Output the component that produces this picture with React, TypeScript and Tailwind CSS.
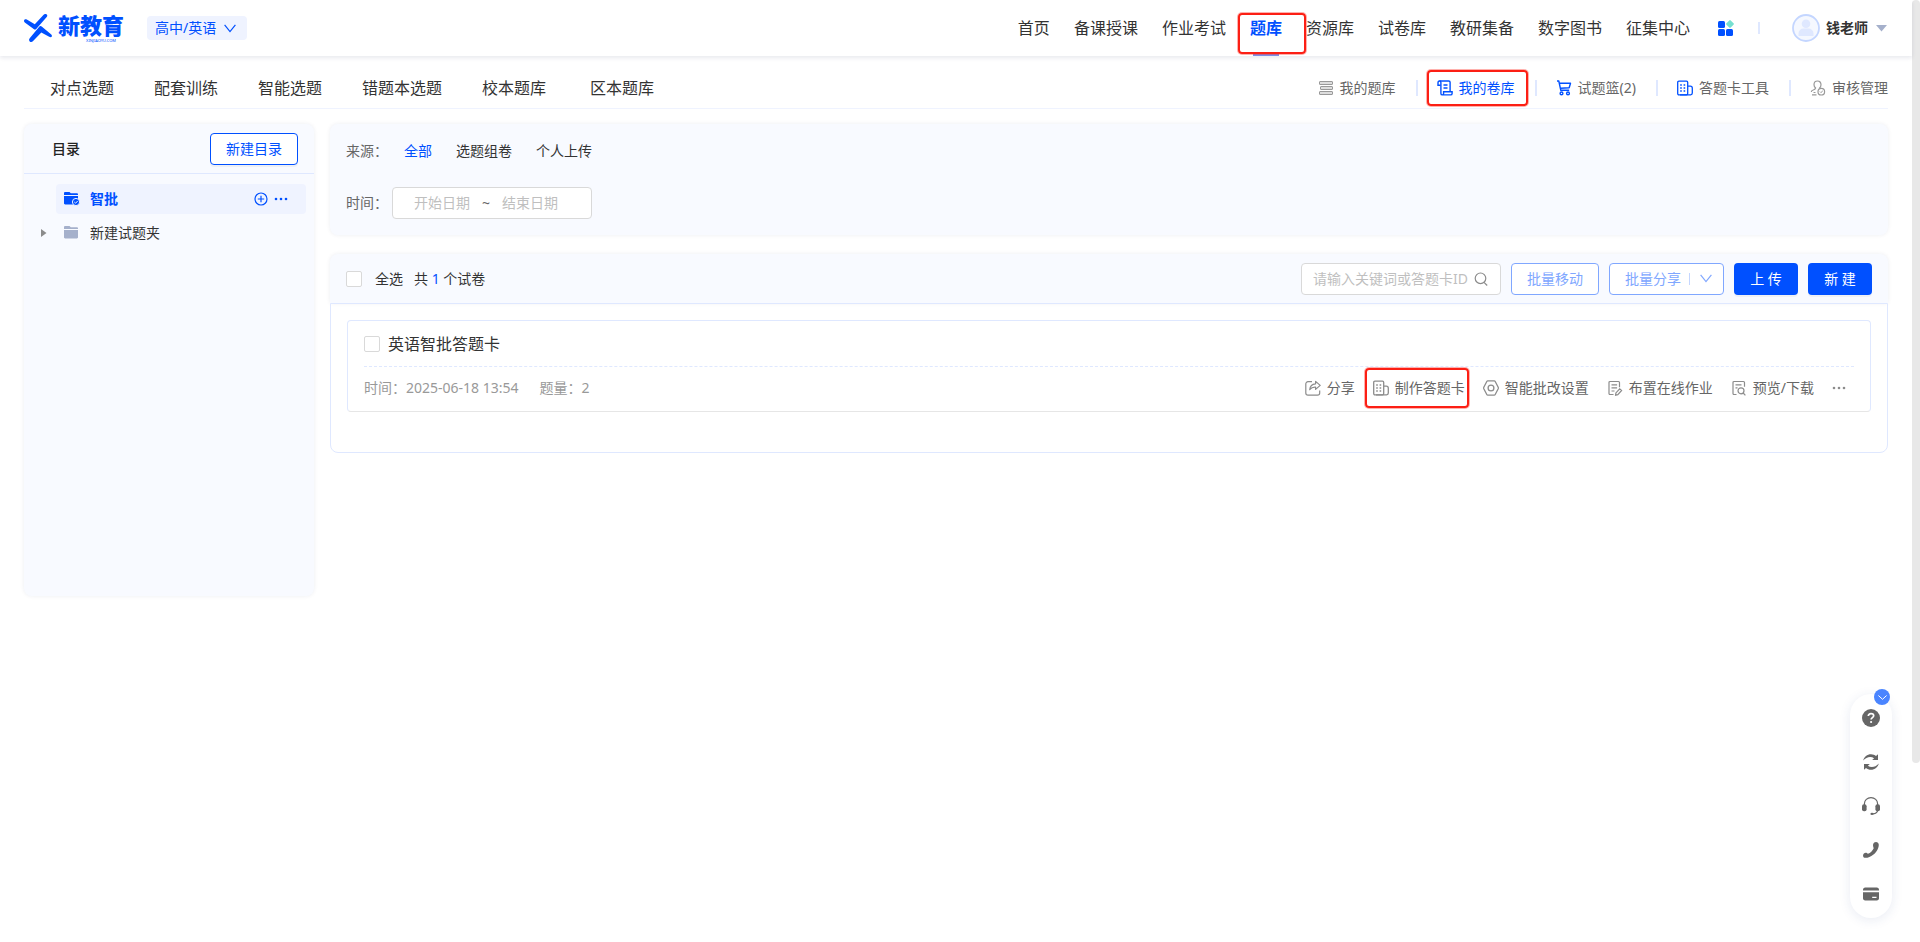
import { type ReactNode, useState } from "react";
import clsx from "clsx";

interface IconProps {
  className?: string;
}

interface Tool {
  label: string;
  icon: ReactNode;
  active?: boolean;
  marked?: boolean;
}

const NAV = [
  "首页",
  "备课授课",
  "作业考试",
  "题库",
  "资源库",
  "试卷库",
  "教研集备",
  "数字图书",
  "征集中心",
];

const TABS = ["对点选题", "配套训练", "智能选题", "错题本选题", "校本题库", "区本题库"];

const SOURCES = ["全部", "选题组卷", "个人上传"];

const FOCUS = "outline-none focus-visible:ring-2 focus-visible:ring-[#80a7ff]";

function LogoMark() {
  return (
    <svg width="28" height="28" viewBox="0 0 28 28" fill="#0050ff" aria-hidden="true">
      <path d="M0 7c0-1.700 1.400-2.300 2.800-1.500l8 4.700L19.400.900c1-1 2.600-1.200 3.400-.5.800.7.500 2-.3 2.900L12.200 14.900c-.8.800-1.700.8-2.500.1L.8 8.600C.3 8.100 0 7.600 0 7z" />
      <path d="M5.200 26.400c-.4-.9 0-1.700.7-2.500l9.100-11c.9-1 2-1 3-.2l9 7.600c.8.700 1.200 1.500.8 2.200-.4.800-1.500.8-2.600.2l-7.900-4.200-8.200 8.600c-1.300 1.300-3.300 1.100-3.900-.7z" />
    </svg>
  );
}

function ChevronIcon({ className }: IconProps) {
  return (
    <svg className={className} width="12" height="9" viewBox="0 0 12 9" fill="none" stroke="currentColor" strokeWidth="1.200" aria-hidden="true">
      <path d="M.6.800 6 7.600 11.400.8" />
    </svg>
  );
}

function AppsIcon() {
  return (
    <svg width="16" height="16" viewBox="0 0 16 16" aria-hidden="true">
      <rect x="0" y="1" width="7" height="7" rx="1.500" fill="#0050ff" />
      <rect x="0" y="9" width="7" height="7" rx="1.500" fill="#0050ff" />
      <rect x="8" y="9" width="7" height="7" rx="1.500" fill="#0050ff" />
      <rect x="9" y="1" width="6" height="6" rx="1" fill="#76e0d0" transform="rotate(45 12 4)" />
    </svg>
  );
}

function AvatarIcon() {
  return (
    <svg width="28" height="28" viewBox="0 0 28 28" aria-hidden="true">
      <circle cx="14" cy="14" r="13" fill="#f5f8ff" stroke="#c4d6ff" strokeWidth="1.800" />
      <circle cx="14" cy="9.800" r="4.300" fill="#dfe8ff" />
      <path d="M6.500 22v-2.500a5 5 0 0 1 5-5h5a5 5 0 0 1 5 5V22z" fill="#dfe8ff" />
    </svg>
  );
}

function StackIcon() {
  return (
    <svg width="16" height="16" viewBox="0 0 16 16" fill="#ddd" stroke="#999" aria-hidden="true">
      <rect x="1.500" y="1.500" width="13" height="3" rx=".5" />
      <rect x="2.500" y="6.500" width="12" height="3" rx=".5" />
      <rect x="1.500" y="11.500" width="13" height="3" rx=".5" />
    </svg>
  );
}

function ScrollIcon() {
  return (
    <svg width="16" height="16" viewBox="0 0 16 16" fill="none" stroke="currentColor" strokeWidth="1.400" aria-hidden="true">
      <path d="M3.600 5.200H1V2.900C1 1.800 1.600 1 2.400 1h9.400c.8 0 1.300.5 1.300 1.300v9.200" />
      <path d="M2.500 1c.8 0 1.400.6 1.400 1.500v10.900c0 .9.600 1.500 1.400 1.500h8.300c.9 0 1.500-.7 1.500-1.500v-1.700H6.600v1.700c0 .9-.5 1.500-1.300 1.500" />
      <path d="M6.500 5h4M6.500 8h4" />
    </svg>
  );
}

function CartIcon() {
  return (
    <svg width="16" height="16" viewBox="0 0 16 16" fill="none" stroke="#0050ff" strokeWidth="1.400" aria-hidden="true">
      <path d="M1 1h1.800l2 9.300h8.400M3.300 3.200h11.200l-1.300 4.600-8.700.4" strokeLinejoin="round" />
      <circle cx="5.500" cy="13.400" r="1.400" />
      <circle cx="12" cy="13.400" r="1.400" />
    </svg>
  );
}

function SheetIcon() {
  return (
    <svg width="16" height="16" viewBox="0 0 16 16" fill="none" stroke="currentColor" strokeWidth="1.300" aria-hidden="true">
      <rect x=".7" y="1.200" width="10" height="13.600" rx="1.200" />
      <path d="M10.700 6.200h2.600a2 2 0 0 1 2 2v4.900a1.700 1.700 0 0 1-1.700 1.700H3" />
      <path d="M3.200 5h1.600m1.800 0h1.600M3.200 8h1.600m1.800 0h1.600M3.200 11h1.600m1.800 0h1.600" strokeWidth="1.500" />
    </svg>
  );
}

function AuditIcon() {
  return (
    <svg width="16" height="16" viewBox="0 0 16 16" fill="none" stroke="#999" strokeWidth="1.200" aria-hidden="true">
      <path d="M9.400 8.200C10.400 7.300 11 6 11 4.700 11 2.600 9.500 1 7.500 1S4 2.600 4 4.700c0 1.300.6 2.500 1.600 3.300-.3 1-1 1.700-2.300 2C2 10.300 1.300 11 1.300 12M2 14.800h4.500M3.500 12.500h2" />
      <circle cx="11.300" cy="11.700" r="3.300" />
      <path d="M9.900 11.600l1 1 1.900-1.700" strokeWidth="1" />
    </svg>
  );
}

function ShareIcon() {
  return (
    <svg width="16" height="16" viewBox="0 0 16 16" fill="none" stroke="#8c8c8c" strokeWidth="1.200" strokeLinejoin="round" aria-hidden="true">
      <path d="M7 1.700H3A2.200 2.200 0 0 0 .8 3.900V13A2.200 2.200 0 0 0 3 15.200h9.500a2.200 2.200 0 0 0 2.200-2.200v-2.500" />
      <path d="M10.600 1.400l4.600 4-4.600 4V7.200C7.600 7 6 8 4.700 9.700 5 6.500 7.200 4 10.600 3.800z" />
    </svg>
  );
}

function HexIcon() {
  return (
    <svg width="16" height="16" viewBox="0 0 16 16" fill="none" stroke="#8c8c8c" strokeWidth="1.300" aria-hidden="true">
      <path d="M4.800.9h6.400c.5 0 .8.200 1 .6l3 5.800c.2.500.2.900 0 1.400l-3 5.800c-.2.400-.5.600-1 .6H4.800c-.5 0-.8-.2-1-.6l-3-5.800c-.2-.5-.2-.9 0-1.400l3-5.800c.2-.4.500-.6 1-.6z" />
      <circle cx="8" cy="8" r="2.900" />
    </svg>
  );
}

function AssignIcon() {
  return (
    <svg width="16" height="16" viewBox="0 0 16 16" fill="none" stroke="#8c8c8c" strokeWidth="1.200" aria-hidden="true">
      <path d="M6.500 14.500H3a1 1 0 0 1-1-1v-11a1 1 0 0 1 1-1h8.500a1 1 0 0 1 1 1v4.800M4.500 4.800h5.600M4.500 7.900h5.600M4.500 11h3" />
      <path d="M8.600 15.200l.3-2.300 3.800-4.100 1.900 1.700-3.800 4.100z" />
    </svg>
  );
}

function PreviewIcon() {
  return (
    <svg width="16" height="16" viewBox="0 0 16 16" fill="none" stroke="#8c8c8c" strokeWidth="1.200" aria-hidden="true">
      <path d="M5.500 14.500H3a1 1 0 0 1-1-1v-11a1 1 0 0 1 1-1h9.500a1 1 0 0 1 1 1v4.300M4.500 4.800h6M4.500 7.900h2" />
      <circle cx="10" cy="10.800" r="3" />
      <path d="M12.200 13l2.200 2.300" />
    </svg>
  );
}

function FolderIcon({ className, checked }: IconProps & { checked?: boolean }) {
  return (
    <svg className={className} width="16" height="14" viewBox="0 0 16 14" aria-hidden="true">
      <path d="M0 1.200C0 .5.500 0 1.200 0h4.300l1.300 1.300h6c.7 0 1.200.5 1.200 1.200v.6H0z" fill="currentColor" />
      <path d="M0 4h14v7.300c0 .7-.5 1.200-1.200 1.200H1.200c-.7 0-1.200-.5-1.200-1.200z" fill="currentColor" />
      {checked && (
        <>
          <circle cx="12" cy="10" r="3.600" fill="currentColor" stroke="#eff3ff" />
          <path d="M10.300 10l1.300 1.200 2.100-2.200" fill="none" stroke="#eff3ff" />
        </>
      )}
    </svg>
  );
}

function PlusIcon() {
  return (
    <svg width="14" height="14" viewBox="0 0 14 14" fill="none" stroke="currentColor" strokeWidth="1.200" aria-hidden="true">
      <circle cx="7" cy="7" r="6" />
      <path d="M7 3.800v6.400M3.800 7h6.400" />
    </svg>
  );
}

function DotsIcon({ className }: IconProps) {
  return (
    <svg className={className} width="14" height="4" viewBox="0 0 14 4" fill="currentColor" aria-hidden="true">
      <circle cx="2" cy="2" r="1.300" />
      <circle cx="7" cy="2" r="1.300" />
      <circle cx="12" cy="2" r="1.300" />
    </svg>
  );
}

function SearchIcon() {
  return (
    <svg width="14" height="14" viewBox="0 0 14 14" fill="none" stroke="#8c8c8c" strokeWidth="1.200" aria-hidden="true">
      <circle cx="6.500" cy="6.300" r="5.300" />
      <path d="M10 10.300l3.200 3.200" />
    </svg>
  );
}

// Red frame that points the reader at a control.
function Marker({ className }: IconProps) {
  return (
    <span
      className={clsx(
        "pointer-events-none absolute z-10 rounded-sm border-2 border-[#fc1f14] shadow-[0_0_0_1px_rgba(252,31,20,0.35)]",
        className
      )}
      aria-hidden="true"
    />
  );
}

function Header() {
  return (
    <header className="relative flex h-14 items-center pl-6 pr-[25px] shadow-[0_2px_4px_rgba(30,40,90,0.1)]">
      <a href="#home" className="flex items-center gap-[6px] whitespace-nowrap text-[#0050ff]">
        <LogoMark />
        <span className="flex w-[66px] flex-col gap-[3px]">
          <span className="text-[22px] leading-[22px] font-black">新教育</span>
          <span className="pr-2 text-right text-[4px] leading-1">XINJIAOYU.COM</span>
        </span>
      </a>

      <div className="relative ml-[23px] flex items-center text-[#0050ff]">
        <select
          aria-label="学段学科"
          className={clsx("h-6 w-[100px] cursor-pointer appearance-none rounded-sm bg-[#eff3ff] pl-2 text-sm", FOCUS)}
        >
          <option>高中/英语</option>
        </select>
        <ChevronIcon className="pointer-events-none absolute right-[11px]" />
      </div>

      <nav className="ml-auto flex h-14 items-center gap-6 text-base whitespace-nowrap text-[#333]">
        {NAV.map((name) => {
          const active = name === "题库";
          return (
            <a
              key={name}
              href="#nav"
              aria-current={active ? "page" : undefined}
              className={clsx(
                "relative flex h-14 items-center",
                active ? "font-bold text-[#0050ff]" : "hover:text-[#0050ff]"
              )}
            >
              {name}
              {active && (
                <>
                  <span className="absolute bottom-0 left-[3px] h-[2px] w-[26px] bg-[#7c8fe6]" />
                  <Marker className="top-[13px] -left-3 h-[41px] w-[68px]" />
                </>
              )}
            </a>
          );
        })}
      </nav>

      <button className="ml-7 cursor-pointer" aria-label="应用">
        <AppsIcon />
      </button>
      <span className="ml-6 h-3 w-[2px] bg-[#dfe8ff]" />
      <button className="ml-8 flex cursor-pointer items-center text-sm font-bold text-[#333]">
        <AvatarIcon />
        <span className="ml-[6px]">钱老师</span>
        <svg className="ml-2" width="11" height="7" viewBox="0 0 11 7" fill="#a5b0cb" aria-hidden="true">
          <path d="M0 0h11L5.500 6.500z" />
        </svg>
      </button>
    </header>
  );
}

function SubNav() {
  const tools: Tool[] = [
    { label: "我的题库", icon: <StackIcon /> },
    { label: "我的卷库", icon: <ScrollIcon />, active: true, marked: true },
    { label: "试题篮(2)", icon: <CartIcon /> },
    { label: "答题卡工具", icon: <span className="text-[#0050ff]"><SheetIcon /></span> },
    { label: "审核管理", icon: <AuditIcon /> },
  ];

  return (
    <div className="mx-6 flex h-[53px] items-center justify-between border-b border-[#eff3ff] pt-3 whitespace-nowrap">
      <nav className="flex gap-10 pl-[26px] text-base text-[#333]">
        {TABS.map((tab) => (
          <a key={tab} href="#tab" className="last:ml-1 hover:text-[#0050ff]">
            {tab}
          </a>
        ))}
      </nav>
      <ul className="flex items-center text-sm">
        {tools.map((tool, i) => (
          <li key={tool.label} className="flex items-center">
            {i > 0 && <span className="mr-[19px] ml-5 h-4 w-[2px] bg-[#dfe8ff]" />}
            <a
              href="#tool"
              className={clsx(
                "relative flex items-center gap-[6px]",
                tool.active ? "text-[#0050ff]" : "text-[#666] hover:text-[#0050ff]"
              )}
            >
              {tool.icon}
              {tool.label}
              {tool.marked && <Marker className="-top-2 -left-[10px] h-9 w-[101px]" />}
            </a>
          </li>
        ))}
      </ul>
    </div>
  );
}

function Sidebar() {
  return (
    <aside className="h-[472px] w-[290px] shrink-0 rounded-lg bg-[#f8faff] shadow-[0_0_4px_rgba(30,40,90,0.08)]">
      <div className="flex h-[50px] items-center justify-between border-b border-[#dfe8ff] pr-4 pl-7">
        <h2 className="text-sm font-medium text-[#222]">目录</h2>
        <button className={clsx("h-8 w-[88px] cursor-pointer rounded-sm border border-[#0050ff] bg-white text-sm text-[#0050ff] shadow-[0_2px_0_rgba(0,0,0,0.04)]", FOCUS)}>
          新建目录
        </button>
      </div>
      <ul className="pt-[10px] pr-2 text-sm">
        <li className="ml-8 flex h-[30px] items-center rounded-sm bg-[#eff3ff] pr-[18px] pl-2 text-[#0050ff]">
          <FolderIcon checked />
          <a href="#folder" className="ml-[10px] font-bold">
            智批
          </a>
          <button className="ml-auto cursor-pointer" aria-label="新建子目录">
            <PlusIcon />
          </button>
          <button className="ml-[6px] cursor-pointer" aria-label="更多">
            <DotsIcon />
          </button>
        </li>
        <li className="mt-1 flex h-[30px] items-center pl-[17px] text-[#333]">
          <button className="cursor-pointer" aria-label="展开">
            <svg width="6" height="8" viewBox="0 0 6 8" fill="#8c8c8c" aria-hidden="true">
              <path d="M0 0l5.500 4L0 8z" />
            </svg>
          </button>
          <FolderIcon className="ml-[17px] text-[#a5b0cb]" />
          <a href="#folder" className="ml-[10px]">
            新建试题夹
          </a>
        </li>
      </ul>
    </aside>
  );
}

function Filters() {
  const [source, setSource] = useState("全部");

  return (
    <section className="rounded-lg bg-[#f8faff] p-4 text-sm shadow-[0_0_4px_rgba(30,40,90,0.08)]">
      <div className="flex h-[22px] items-center text-[#333]">
        <span className="w-[58px] text-[#666]">来源：</span>
        <div className="flex gap-6">
          {SOURCES.map((item) => (
            <button
              key={item}
              onClick={() => setSource(item)}
              className={clsx("cursor-pointer", item === source && "text-[#0050ff]")}
            >
              {item}
            </button>
          ))}
        </div>
      </div>
      <div className="mt-[25px] flex items-center">
        <span className="w-[46px] text-[#666]">时间：</span>
        <div className="flex h-8 w-[200px] items-center rounded-sm border border-[#d9d9d9] bg-white pl-[19px]">
          <input className="w-[60px] text-center outline-none placeholder:text-[#bfbfbf]" placeholder="开始日期" aria-label="开始日期" />
          <span className="w-7 text-center text-[#666]">~</span>
          <input className="w-[60px] text-center outline-none placeholder:text-[#bfbfbf]" placeholder="结束日期" aria-label="结束日期" />
        </div>
      </div>
    </section>
  );
}

function Checkbox({ id }: { id: string }) {
  return (
    <input
      id={id}
      type="checkbox"
      className="size-4 cursor-pointer appearance-none rounded-xs border border-[#d9d9d9] bg-white checked:border-[#0050ff] checked:bg-[#0050ff]"
    />
  );
}

function Toolbar() {
  return (
    <div className="flex h-[49px] items-center rounded-t-lg bg-[#f8faff] px-4 text-sm whitespace-nowrap shadow-[0_0_4px_rgba(30,40,90,0.08)]">
      <Checkbox id="select-all" />
      <label htmlFor="select-all" className="ml-[13px] cursor-pointer text-[#333]">
        全选
      </label>
      <p className="ml-[11px] text-[#333]">
        共 <span className="text-[#0050ff]">1</span> 个试卷
      </p>

      <div className="ml-auto flex items-center gap-[10px]">
        <div className="flex h-8 w-[200px] items-center rounded-sm border border-[#d9d9d9] bg-white pr-3 pl-[11px]">
          <input
            className="min-w-0 flex-1 outline-none placeholder:text-[#bfbfbf]"
            placeholder="请输入关键词或答题卡ID"
            aria-label="搜索试卷"
          />
          <button className="cursor-pointer" aria-label="搜索">
            <SearchIcon />
          </button>
        </div>
        <button className={clsx("h-8 w-[88px] cursor-pointer rounded-sm border border-[#80a7ff] bg-white text-[#80a7ff]", FOCUS)}>
          批量移动
        </button>
        <button className={clsx("flex h-8 w-[115px] cursor-pointer items-center rounded-sm border border-[#80a7ff] bg-white pl-[15px] text-[#80a7ff]", FOCUS)}>
          批量分享
          <span className="mr-[10px] ml-2 h-3 w-px bg-[#c4d6ff]" />
          <ChevronIcon />
        </button>
        <button className={clsx("h-8 w-16 cursor-pointer rounded-sm bg-[#0050ff] text-white shadow-[0_2px_0_rgba(0,0,0,0.04)]", FOCUS)}>
          上 传
        </button>
        <button className={clsx("h-8 w-16 cursor-pointer rounded-sm bg-[#0050ff] text-white shadow-[0_2px_0_rgba(0,0,0,0.04)]", FOCUS)}>
          新 建
        </button>
      </div>
    </div>
  );
}

function PaperCard() {
  const actions: Tool[] = [
    { label: "分享", icon: <ShareIcon /> },
    { label: "制作答题卡", icon: <span className="text-[#8c8c8c]"><SheetIcon /></span>, marked: true },
    { label: "智能批改设置", icon: <HexIcon /> },
    { label: "布置在线作业", icon: <AssignIcon /> },
    { label: "预览/下载", icon: <PreviewIcon /> },
  ];

  return (
    <article className="rounded-sm border border-[#dfe8ff] border-b-[#e6e6e6] px-4 whitespace-nowrap">
      <div className="flex h-[46px] items-center border-b border-dashed border-[#dfe8ff]">
        <Checkbox id="paper" />
        <label htmlFor="paper" className="ml-2 cursor-pointer text-base text-[#333]">
          英语智批答题卡
        </label>
      </div>
      <div className="flex h-11 items-center justify-between pb-[2px] text-sm">
        <p className="flex gap-[21px] text-[#999]">
          <span>时间：2025-06-18 13:54</span>
          <span>题量：2</span>
        </p>
        <div className="flex items-center gap-[18px] pr-2 text-[#666]">
          {actions.map((action) => (
            <button key={action.label} className="relative flex cursor-pointer items-center gap-[6px] hover:text-[#0050ff]">
              {action.icon}
              {action.label}
              {action.marked && <Marker className="-top-[10px] -left-2 h-10 w-[104px]" />}
            </button>
          ))}
          <button className="cursor-pointer" aria-label="更多">
            <DotsIcon className="text-[#8c8c8c]" />
          </button>
        </div>
      </div>
    </article>
  );
}

function FloatBar() {
  return (
    <div className="fixed right-7 bottom-6 flex w-[42px] flex-col items-center gap-[26px] rounded-full bg-white py-[15px] text-[#666] shadow-[0_2px_12px_rgba(30,60,140,0.1)]">
      <button className="absolute -top-[5px] right-[2px] flex size-4 cursor-pointer items-center justify-center rounded-full bg-[#4a85ff]" aria-label="收起">
        <svg width="9" height="5" viewBox="0 0 9 5" fill="none" stroke="#fff" aria-hidden="true">
          <path d="M.4.500l4.100 3.800L8.600.5" />
        </svg>
      </button>
      <button className="cursor-pointer" aria-label="帮助">
        <svg width="18" height="18" viewBox="0 0 18 18" aria-hidden="true">
          <circle cx="9" cy="9" r="9" fill="currentColor" />
          <path d="M6.300 7.100c0-1.500 1.100-2.500 2.700-2.500s2.700.9 2.700 2.200c0 1.900-2.600 1.800-2.600 3.800" fill="none" stroke="#fff" strokeWidth="1.700" />
          <circle cx="9.100" cy="13" r="1.100" fill="#fff" />
        </svg>
      </button>
      <button className="cursor-pointer" aria-label="刷新">
        <svg width="18" height="18" viewBox="0 0 18 18" fill="currentColor" aria-hidden="true">
          <path d="M1.200 7.500C2 3.800 5.200 1.200 9 1.200c2 0 3.700.7 5 1.800L16 1.300v5.600h-5.800l1.900-1.700C9 3 4.500 3.600 1.200 7.500z" />
          <path d="M16.800 10.500c-.8 3.700-4 6.300-7.800 6.300-2 0-3.700-.7-5-1.800L2 16.700v-5.600h5.800l-1.900 1.700c3.100 2.200 7.600 1.600 10.900-2.300z" />
        </svg>
      </button>
      <button className="cursor-pointer" aria-label="客服">
        <svg width="18" height="18" viewBox="0 0 18 18" aria-hidden="true">
          <path d="M2.400 8V6.800C2.400 3.200 5.300.7 9 .7s6.600 2.500 6.600 6.100V13c0 2.200-1.800 3.600-4.600 3.900" fill="none" stroke="currentColor" strokeWidth="1.200" />
          <rect x="0" y="7.200" width="4.600" height="7" rx="2" fill="currentColor" />
          <rect x="13.400" y="7.200" width="4.600" height="7" rx="2" fill="currentColor" />
          <ellipse cx="10" cy="16.900" rx="1.600" ry="1.100" fill="currentColor" />
        </svg>
      </button>
      <button className="cursor-pointer" aria-label="电话">
        <svg width="18" height="18" viewBox="0 0 18 18" fill="currentColor" aria-hidden="true">
          <path d="M12.200 1.500c1.200-.8 2.800-.7 3.700.2.900.8 1 2 .8 3.300-.9 5.300-5.700 10.500-11.300 11.700-1.700.4-3.300.1-4-.8-.6-.8-.4-2.300.5-3.300.9-.9 2.200-1 3.200-.4l.9.600c2.400-1 4.600-3 5.700-5.600l-.4-1.200c-.5-1.400-.4-3.600.9-4.500z" />
        </svg>
      </button>
      <button className="cursor-pointer" aria-label="会员卡">
        <svg width="18" height="18" viewBox="0 0 18 18" fill="currentColor" aria-hidden="true">
          <path d="M1 5.600V4.700c0-1.200.9-2.200 2.200-2.200h11.600c1.300 0 2.200 1 2.200 2.200v.9z" />
          <path d="M1 7.300h16v6c0 1.300-.9 2.200-2.200 2.200H3.200C1.900 15.500 1 14.600 1 13.300zm9.200 4.500V13h4.300v-1.200z" fillRule="evenodd" />
        </svg>
      </button>
    </div>
  );
}

export default function App() {
  return (
    <div className="flex min-h-screen bg-white font-['Noto_Sans','Noto_Sans_CJK_SC',sans-serif]">
      <div className="min-w-0 flex-1">
        <Header />
        <SubNav />
        <div className="flex items-start gap-4 px-6 pt-[15px]">
          <Sidebar />
          <main className="min-w-0 flex-1">
            <Filters />
            <section className="mt-[19px]">
              <Toolbar />
              <div className="rounded-b-lg border border-[#dfe8ff] px-4 pt-4 pb-10">
                <PaperCard />
              </div>
            </section>
          </main>
        </div>
      </div>
      <div className="w-2 shrink-0" aria-hidden="true">
        <div className="h-[81vh] rounded-full bg-[#e8e8e8]" />
      </div>
      <FloatBar />
    </div>
  );
}
